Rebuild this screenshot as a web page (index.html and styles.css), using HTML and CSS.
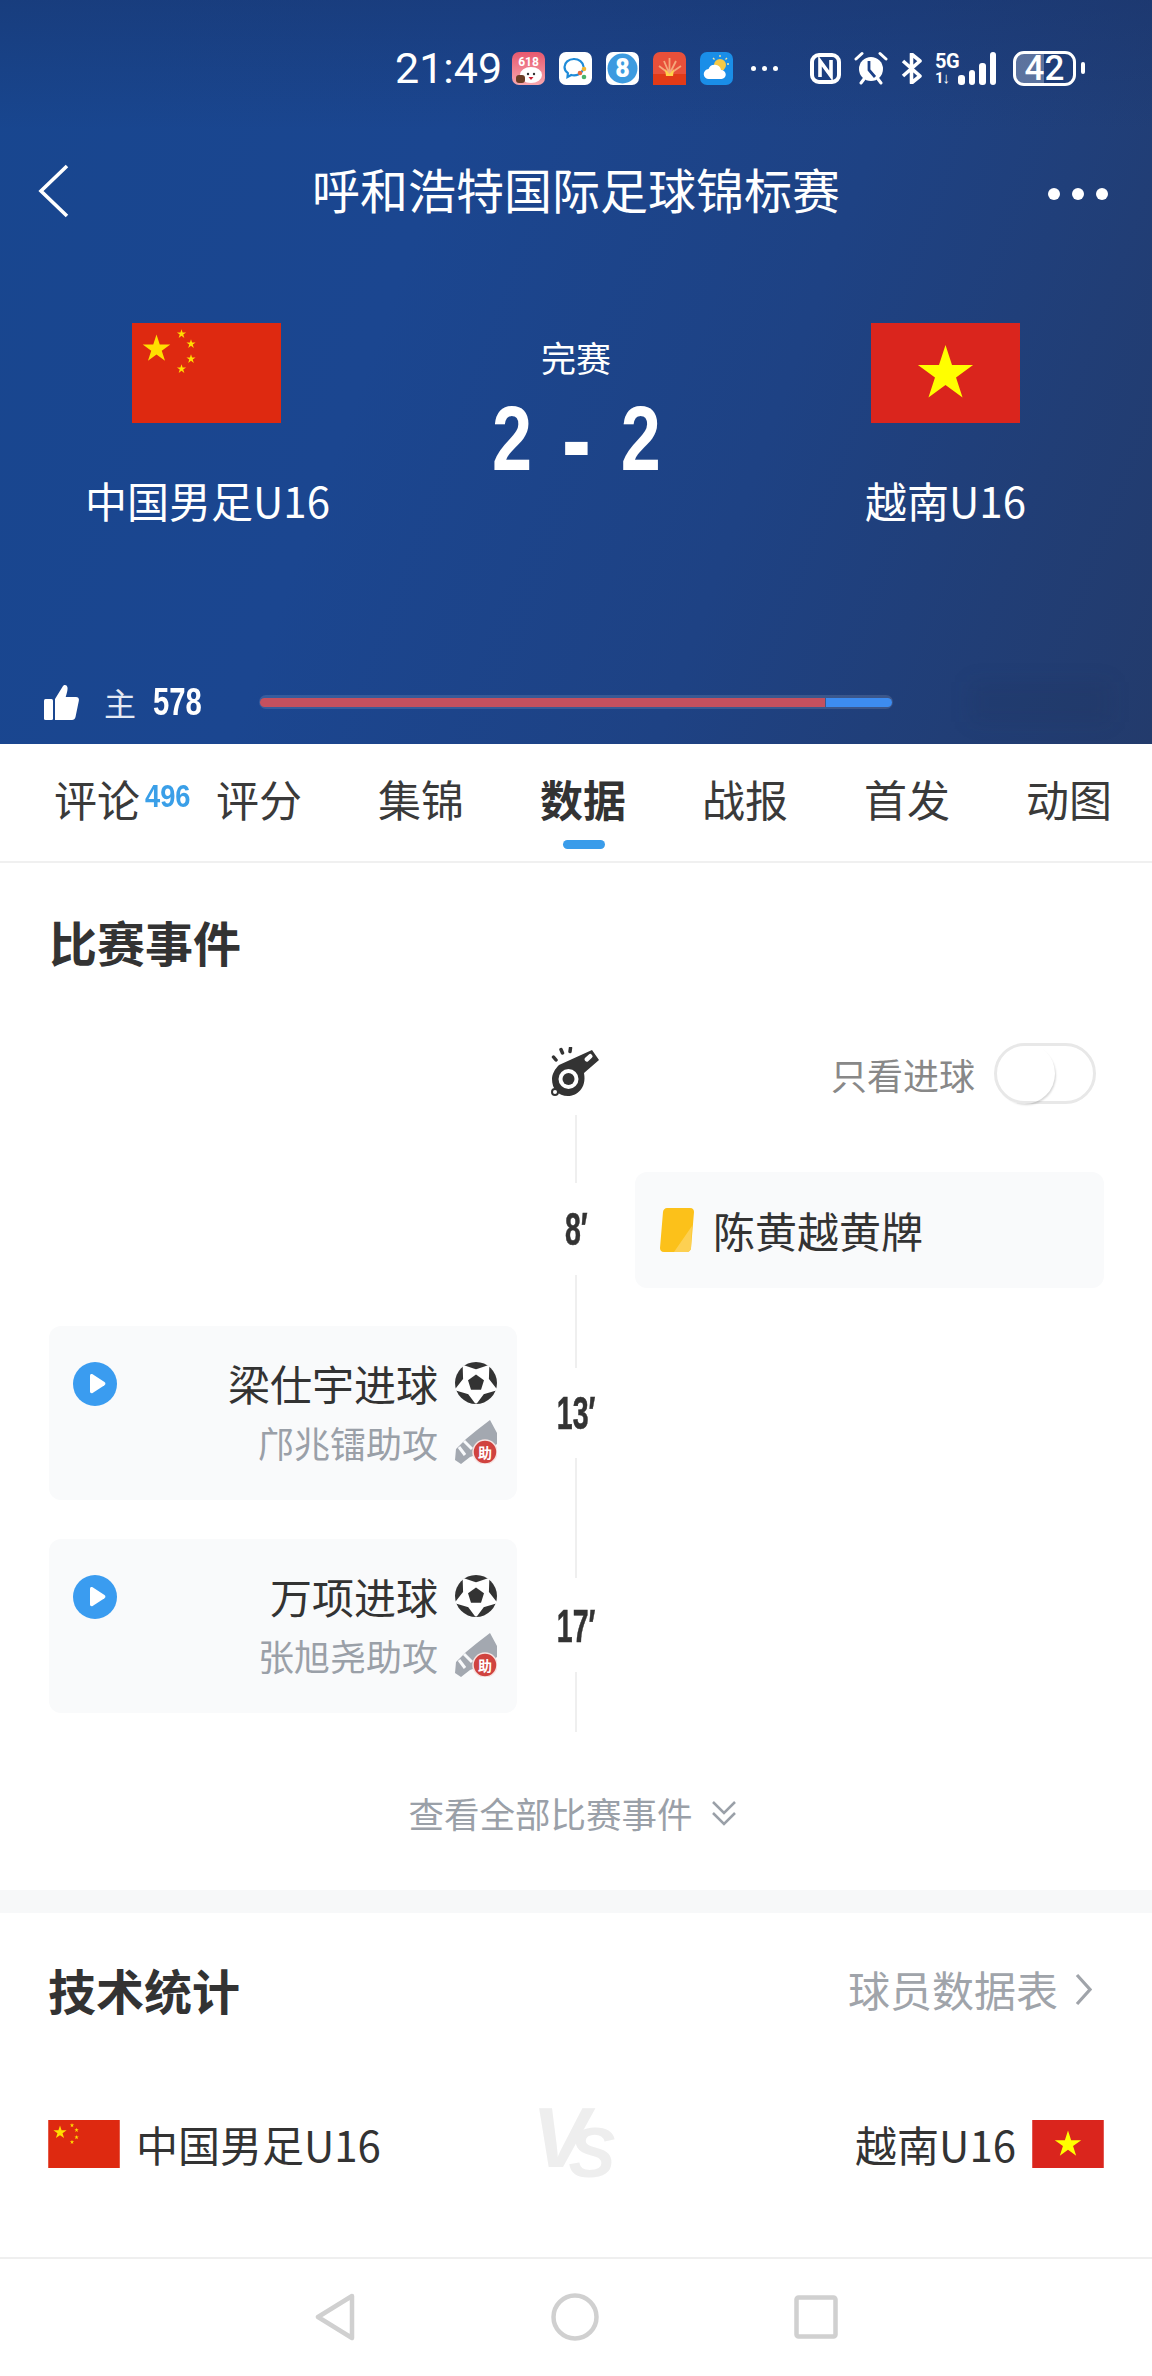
FILE: index.html
```html
<!DOCTYPE html>
<html lang="zh-CN">
<head>
<meta charset="utf-8">
<title>呼和浩特国际足球锦标赛</title>
<link rel="stylesheet" href="styles.css">
</head>
<body>
<svg class="defs" width="0" height="0" aria-hidden="true">
  <defs>
    <path id="star" d="M0-1 .2245-.309H.951L.363.118.588.809 0 .382-.588.809-.363.118-.951-.309H-.2245Z"/>
    <symbol id="flag-cn" viewBox="0 0 149 100">
      <rect width="149" height="100" fill="#de2910"/>
      <g fill="#ffde00">
        <use href="#star" transform="translate(24.5 26) scale(14.5)"/>
        <use href="#star" transform="translate(49.5 11) scale(4.8)"/>
        <use href="#star" transform="translate(59 21) scale(4.8)"/>
        <use href="#star" transform="translate(59 36) scale(4.8)"/>
        <use href="#star" transform="translate(49.5 46) scale(4.8)"/>
      </g>
    </symbol>
    <symbol id="flag-vn" viewBox="0 0 149 100">
      <rect width="149" height="100" fill="#da251d"/>
      <use href="#star" fill="#ffff00" transform="translate(74.5 51) scale(29)"/>
    </symbol>
    <symbol id="ball" viewBox="0 0 42 42">
      <circle cx="21" cy="21" r="21" fill="#333"/>
      <path d="M32.8 4.8 32.4 17.3 40 27.2 28.1 30.7 21 40 13.9 30.7 2 27.2 9.6 17.3 9.2 4.8 21 9Z" fill="#fff" stroke="#fff" stroke-width="3" stroke-linejoin="round"/>
      <path d="M21 12.500 29 18.300 26 27.800H16L13 18.300Z" fill="#333"/>
    </symbol>
    <symbol id="boot" viewBox="0 0 42 44">
      <path d="M22 10 35 0 42 13V24L30 32 15 37 6 44 0 40 1 29 11 19Z" fill="#a3a8b0"/>
      <path d="M9 21 17 29M4 27 10 35" stroke="#f8f9fb" stroke-width="3"/>
      <circle cx="30" cy="32" r="12" fill="#d0433f" stroke="#f6e4e2" stroke-width="1.500"/>
    </symbol>
    <symbol id="play" viewBox="0 0 44 44">
      <circle cx="22" cy="22" r="22" fill="#3a9cf0"/>
      <path d="M17 13.500c0-1.400 1.400-2 2.600-1.300L31.500 20c1.200.8 1.200 2.400 0 3.200L19.600 31c-1.200.7-2.600 0-2.600-1.400Z" fill="#fff"/>
    </symbol>
  </defs>
</svg>

<div class="page">
  <header class="hero">
    <div class="status">
      <span class="clock">21:49</span>
      <div class="apps">
        <svg class="app" viewBox="0 0 33 33"><defs><linearGradient id="g618" x1="0" y1="0" x2="0" y2="1"><stop offset="0" stop-color="#e8586e"/><stop offset="1" stop-color="#f7a6ae"/></linearGradient></defs><rect width="33" height="33" rx="7" fill="url(#g618)"/><text x="16.500" y="14" class="app-618" text-anchor="middle">618</text><ellipse cx="19" cy="23" rx="11" ry="8" fill="#fff"/><circle cx="16" cy="22" r="1.200" fill="#333"/><circle cx="22" cy="22" r="1.200" fill="#333"/><path d="M16.500 25h5l-2.500 3Z" fill="#c23"/><rect x="4" y="23" width="9" height="8" rx="3" fill="#6b3e26"/></svg>
        <svg class="app" viewBox="0 0 33 33"><rect width="33" height="33" rx="7" fill="#fff"/><path d="M15 7C9.500 7 5.500 10.500 5.500 15c0 2.600 1.300 4.700 3.400 6.200L8.500 25l3.800-2c5 1 10-.8 11.500-4.800" fill="none" stroke="#1e8bd8" stroke-width="2.200" stroke-linecap="round"/><path d="M15 7c5 0 9 3 9.500 7.500" fill="none" stroke="#1e8bd8" stroke-width="2.200" stroke-linecap="round"/><circle cx="25" cy="17" r="2.300" fill="#f2b632"/><circle cx="21" cy="21" r="2.300" fill="#e56a3c"/><circle cx="25" cy="25" r="2.300" fill="#49b36a"/></svg>
        <svg class="app" viewBox="0 0 33 33"><rect width="33" height="33" rx="7" fill="#fff"/><circle cx="16.500" cy="16.500" r="15" fill="#3d9be0"/><text x="16.500" y="25" class="app-8" text-anchor="middle">8</text></svg>
        <svg class="app" viewBox="0 0 33 33"><rect width="33" height="33" rx="7" fill="#e8503a"/><rect y="22" width="33" height="11" fill="#e23a17"/><path d="M16.500 22 11 9M16.500 22 16.500 6M16.500 22 23 9M16.500 22 6 14M16.500 22 28 14" stroke="#f6a77a" stroke-width="1.800"/><path d="M12 17l4.500 5 4.500-5-1 7h-7Z" fill="#ffd24a"/></svg>
        <svg class="app" viewBox="0 0 33 33"><rect width="33" height="33" rx="7" fill="#1a8ee8"/><circle cx="20" cy="13" r="6" fill="#f6c945"/><path d="M20 3v2M29 12h-2M27 6l-1.500 1.500M13 6l1.500 1.500" stroke="#f6e7a0" stroke-width="1.300"/><path d="M9 27a5 5 0 0 1-.5-10 6.500 6.500 0 0 1 12.500 1 4.500 4.500 0 0 1 .5 9Z" fill="#fff"/></svg>
      </div>
      <div class="more-notif"><i></i><i></i><i></i></div>
      <svg class="st-nfc" viewBox="0 0 31 31"><rect x="2" y="2" width="27" height="27" rx="7" fill="none" stroke="#fff" stroke-width="4"/><path d="M10 24V8l11 15V7" fill="none" stroke="#fff" stroke-width="3.600"/></svg>
      <svg class="st-alarm" viewBox="0 0 34 34"><circle cx="17" cy="18" r="12" fill="#fff"/><path d="M2 8 8 2.500M32 8l-6-5.500M7 32l3-4M27 32l-3-4" stroke="#fff" stroke-width="3" stroke-linecap="round"/><path d="M15 10v9l6 7" fill="none" stroke="#1b3f87" stroke-width="2.800"/></svg>
      <svg class="st-bt" viewBox="0 0 22 31"><path d="M2 8 19 23 10.500 30V1L19 8 2 23" fill="none" stroke="#fff" stroke-width="3.600" stroke-linejoin="round"/></svg>
      <div class="st-net"><span class="five-g">5G</span><span class="one-down">1↓</span></div>
      <div class="signal"><i class="s1"></i><i class="s2"></i><i class="s3"></i><i class="s4"></i></div>
      <div class="battery"><div class="battery-box"><span>42</span></div><i class="nub"></i></div>
    </div>

    <div class="nav-row">
      <svg class="back" viewBox="0 0 32 54"><path d="M29 2 3 27l26 25" fill="none" stroke="#fff" stroke-width="3.600"/></svg>
      <h1 class="title">呼和浩特国际足球锦标赛</h1>
      <div class="dots"><i></i><i></i><i></i></div>
    </div>

    <div class="match">
      <div class="team">
        <svg class="flag-big flag-left"><use href="#flag-cn"/></svg>
        <div class="team-name">中国男足U16</div>
      </div>
      <div class="score-box">
        <div class="state">完赛</div>
        <div class="score"><span>2</span><span class="dash">-</span><span>2</span></div>
      </div>
      <div class="team team-right">
        <svg class="flag-big"><use href="#flag-vn"/></svg>
        <div class="team-name">越南U16</div>
      </div>
    </div>

    <div class="likes">
      <svg class="thumb" viewBox="0 0 35 36"><rect y="15" width="9" height="21" rx="1.500" fill="#fff"/><path d="M11 15 19 2c.8-1.500 4-1.800 4.500 1.500.3 2.500-.8 6-1.800 9.500H32c2.500 0 3.300 1.800 2.800 4L31.500 33c-.4 2-1.800 3-3.500 3H11Z" fill="#fff"/></svg>
      <span class="home">主</span>
      <span class="like-num">578</span>
      <div class="bar"><div class="bar-red"></div><div class="bar-blue"></div></div>
      <div class="smudge"></div>
    </div>
  </header>

  <nav class="tabs">
    <a class="tab">评论<sup class="badge">496</sup></a>
    <a class="tab">评分</a>
    <a class="tab">集锦</a>
    <a class="tab active">数据</a>
    <a class="tab">战报</a>
    <a class="tab">首发</a>
    <a class="tab">动图</a>
  </nav>

  <section class="events">
    <h2 class="heading">比赛事件</h2>
    <div class="timeline">
      <div class="side left">
        <div class="event-card goal">
          <svg class="play"><use href="#play"/></svg>
          <div class="goal-lines">
            <div class="goal-line"><span class="goal-name">梁仕宇进球</span><svg class="ic42"><use href="#ball"/></svg></div>
            <div class="goal-line"><span class="assist-name">邝兆镭助攻</span><span class="boot-wrap"><svg class="ic-boot"><use href="#boot"/></svg><b class="boot-mark">助</b></span></div>
          </div>
        </div>
        <div class="event-card goal">
          <svg class="play"><use href="#play"/></svg>
          <div class="goal-lines">
            <div class="goal-line"><span class="goal-name">万项进球</span><svg class="ic42"><use href="#ball"/></svg></div>
            <div class="goal-line"><span class="assist-name">张旭尧助攻</span><span class="boot-wrap"><svg class="ic-boot"><use href="#boot"/></svg><b class="boot-mark">助</b></span></div>
          </div>
        </div>
      </div>

      <div class="axis">
        <svg class="whistle" viewBox="0 0 48 49">
          <path d="M5 13 2.500 10M11.500 6 10 2.500M19 4.500 19.500 1" stroke="#333" stroke-width="3.500" stroke-linecap="round"/>
          <path d="M8 18 41 3 48 13 33 26C36 42 25 49 17 49 7 49 1 42 1 32c0-5 3-10 7-14Z" fill="#333"/>
          <circle cx="17.500" cy="32" r="10" fill="#fff"/>
          <circle cx="17.500" cy="32" r="6" fill="#333"/>
          <rect x="33" y="9" width="9" height="4.500" rx="2" transform="rotate(-42 37 11)" fill="#fff"/>
          <circle cx="4" cy="45" r="3" fill="#fff" stroke="#333" stroke-width="2"/>
        </svg>
        <i class="seg seg-a"></i>
        <div class="minute m8"><span>8′</span></div>
        <i class="seg seg-b"></i>
        <div class="minute m13"><span>13′</span></div>
        <i class="seg seg-c"></i>
        <div class="minute m17"><span>17′</span></div>
        <i class="seg seg-d"></i>
      </div>

      <div class="side right">
        <div class="only-goals"><span>只看进球</span><div class="toggle"><i></i></div></div>
        <div class="event-card card-event">
          <svg class="yellow" viewBox="0 0 34 44"><path d="M7 0h23c3 0 4 2 4 4l-3 36c0 2-2 4-4 4H4c-3 0-4-2-4-4L3 4c0-2 2-4 4-4Z" fill="#fcc11a"/><path d="M32 18 31 40c0 2-2 4-4 4H14Z" fill="#fdd052"/></svg>
          <span class="goal-name">陈黄越黄牌</span>
        </div>
      </div>
    </div>
    <div class="all-events">
      <span>查看全部比赛事件</span>
      <svg class="dbl" viewBox="0 0 26 26"><path d="M2 2 13 13 24 2M2 13 13 24 24 13" fill="none" stroke="#9aa0a8" stroke-width="2.500"/></svg>
    </div>
  </section>

  <div class="band"></div>

  <section class="stats">
    <div class="stats-head">
      <h2 class="heading">技术统计</h2>
      <div class="player-link"><span>球员数据表</span><svg class="right-chev" viewBox="0 0 17 33"><path d="M2 2 15 16.500 2 31" fill="none" stroke="#a0a4aa" stroke-width="3.200"/></svg></div>
    </div>
    <div class="versus">
      <div class="versus-side">
        <svg class="flag-small"><use href="#flag-cn"/></svg>
        <span class="versus-name">中国男足U16</span>
      </div>
      <div class="vs-mark"><span class="vs-v">V</span><span class="vs-s">S</span></div>
      <div class="versus-side">
        <span class="versus-name">越南U16</span>
        <svg class="flag-small"><use href="#flag-vn"/></svg>
      </div>
    </div>
  </section>

  <footer class="sysnav">
    <svg class="sys-back" viewBox="0 0 42 48"><path d="M38 3 4 24l34 21Z" fill="none" stroke="#d0d0d0" stroke-width="4.500" stroke-linejoin="round"/></svg>
    <svg class="sys-home" viewBox="0 0 48 48"><circle cx="24" cy="24" r="21.500" fill="none" stroke="#d0d0d0" stroke-width="4.500"/></svg>
    <svg class="sys-recent" viewBox="0 0 44 44"><rect x="2.500" y="2.500" width="39" height="39" rx="2" fill="none" stroke="#d0d0d0" stroke-width="4.500"/></svg>
  </footer>
</div>
</body>
</html>
```

FILE: styles.css
```css
* { box-sizing: border-box; }
html, body { margin: 0; padding: 0; background: #fff; }
body { font-family: "Noto Sans CJK SC", "Noto Sans", sans-serif; color: #333; }
i { display: block; }
h1, h2 { margin: 0; }
.defs { display: block; height: 0; }
.page { width: 1152px; height: 2376px; overflow: hidden; display: flex; flex-direction: column; background: #fff; }

/* hero */
.hero {
  height: 744px; flex: none; color: #fff; display: flex; flex-direction: column;
  background:
    linear-gradient(180deg, rgba(24,48,100,.4) 0, rgba(24,48,100,0) 130px),
    linear-gradient(110deg, #18468f 0%, #1b4690 35%, #1e4284 65%, #233b6c 100%);
}
.status { height: 86px; padding: 50px 0 0 395px; display: flex; align-items: center; flex: none; }
.clock { font-family: Roboto, sans-serif; font-size: 43px; line-height: 36px; width: 117px; flex: none; }
.apps { display: flex; gap: 14px; flex: none; }
.app { width: 33px; height: 33px; display: block; }
.app-618 { font: 700 12px Roboto, sans-serif; fill: #fff; }
.app-8 { font: 900 25px Roboto, sans-serif; fill: #fff; }
.more-notif { display: flex; gap: 6px; margin-left: 18px; }
.more-notif i { width: 5px; height: 5px; border-radius: 50%; background: #fff; }
.st-nfc { width: 31px; height: 31px; margin-left: 32px; flex: none; }
.st-alarm { width: 34px; height: 34px; margin-left: 13px; flex: none; }
.st-bt { width: 22px; height: 31px; margin-left: 13px; flex: none; }
.st-net { width: 24px; margin-left: 12px; display: flex; flex-direction: column; font-family: Roboto, sans-serif; font-weight: 700; line-height: 1; flex: none; }
.five-g { font-size: 20px; line-height: 19px; letter-spacing: -.5px; }
.one-down { font-size: 15px; line-height: 14px; letter-spacing: -1px; }
.signal { display: flex; align-items: flex-end; gap: 4px; height: 34px; margin-left: -1px; flex: none; }
.signal i { width: 6.500px; background: #fff; border-radius: 3px; }
.s1 { height: 10px; } .s2 { height: 15px; } .s3 { height: 22px; } .s4 { height: 33px; }
.battery { display: flex; align-items: center; margin-left: 17px; flex: none; }
.battery-box { width: 63px; height: 35px; border: 3px solid #fff; border-radius: 11px; display: flex; align-items: center; justify-content: center; background: linear-gradient(90deg, rgba(255,255,255,.28) 0 50%, transparent 50%); }
.battery-box span { font: 500 35px/29px Roboto, sans-serif; }
.nub { width: 4px; height: 12px; border-radius: 2px; background: #fff; margin-left: 5px; }

.nav-row { margin-top: 75px; height: 60px; flex: none; display: grid; grid-template-columns: 1fr auto 1fr; grid-template-rows: 60px; align-items: center; padding: 0 44px; }
.back { width: 32px; height: 54px; display: block; margin-left: -6px; }
.title { font-size: 48px; line-height: 60px; font-weight: 400; white-space: nowrap; margin-bottom: 6px; }
.dots { display: flex; justify-content: flex-end; gap: 12px; margin-top: 6px; }
.dots i { width: 12px; height: 12px; border-radius: 50%; background: #fff; }

.match { margin-top: 102px; display: grid; grid-template-columns: 415px 322px 415px; flex: none; }
.team { display: flex; flex-direction: column; align-items: center; }
.team-right { padding-left: 2px; }
.flag-big { width: 149px; height: 100px; display: block; }
.flag-left { margin-right: 3px; }
.team-name { margin-top: 52px; font-size: 42px; line-height: 50px; white-space: nowrap; }
.score-box { display: flex; flex-direction: column; align-items: center; }
.state { margin-top: 14px; font-size: 35px; line-height: 40px; }
.score { margin-top: 17px; height: 90px; display: flex; align-items: center; justify-content: center; gap: 37px; font-family: "Liberation Sans", sans-serif; font-weight: 700; font-size: 90px; line-height: 90px; transform: scaleX(.8); }
.dash { font-size: 110px; }

.likes { margin-top: auto; height: 44px; margin-bottom: 20px; padding-left: 44px; display: flex; align-items: center; flex: none; }
.thumb { width: 35px; height: 36px; flex: none; }
.home { margin-left: 25px; font-size: 32px; line-height: 40px; width: 32px; color: #e4eaf4; }
.like-num { display: block; margin-left: 17px; width: 57px; font-family: "Liberation Sans", sans-serif; font-weight: 700; font-size: 38px; line-height: 40px; transform: scaleX(.77); transform-origin: left center; }
.bar { width: 634px; height: 14px; margin-left: 49px; padding: 2.500px 1px; border-radius: 7px; background: rgba(255,255,255,.12); display: flex; gap: 1px; flex: none; }
.bar-red { width: 565px; background: #c4505e; border-radius: 5px 0 0 5px; }
.bar-blue { flex: 1; background: #3d8cf0; border-radius: 0 5px 5px 0; }
.smudge { width: 140px; height: 40px; margin-left: 77px; background: rgba(30,40,70,.1); filter: blur(10px); }

/* tabs */
.tabs { height: 119px; flex: none; border-bottom: 2px solid #f0f0f0; display: flex; gap: 76px; padding: 0 0 0 54px; }
.tab { position: relative; width: 86px; flex: none; font-size: 43px; line-height: 108px; height: 117px; color: #3a3a3a; white-space: nowrap; }
.tab.active { font-weight: 700; color: #333; }
.tab.active::after { content: ""; position: absolute; left: 23px; top: 96px; width: 42px; height: 9px; border-radius: 5px; background: #3a9cea; }
.badge { position: absolute; left: 91px; top: 38px; font-family: "Liberation Sans", sans-serif; font-weight: 700; font-size: 31px; line-height: 30px; color: #3a9fe8; vertical-align: baseline; transform: scaleX(.88); transform-origin: left center; }

/* events */
.events { height: 1027px; flex: none; }
.heading { font-size: 48px; line-height: 60px; font-weight: 700; color: #333; white-space: nowrap; }
.events > .heading { margin: 48px 0 0 49px; }
.timeline { margin-top: 72px; display: grid; grid-template-columns: 468px 118px 469px; padding-left: 49px; }
.axis { display: flex; flex-direction: column; align-items: center; padding-top: 4px; }
.whistle { width: 48px; height: 49px; display: block; margin-bottom: 19px; flex: none; margin-left: -2px; }
.seg { width: 2px; background: #efefef; flex: none; }
.seg-a { height: 68px; } .seg-b { height: 93px; } .seg-c { height: 120px; } .seg-d { height: 60px; }
.minute { width: 100%; text-align: center; font-family: "Liberation Sans", sans-serif; font-weight: 700; font-size: 46px; line-height: 90px; color: #333; flex: none; white-space: nowrap; }
.minute span { display: inline-block; transform: scaleX(.62); -webkit-text-stroke: .6px #333; }
.m8 { height: 92px; padding-top: 1px; } .m13 { height: 90px; } .m17 { height: 94px; padding-top: 3px; }
.side.left { padding-top: 283px; display: flex; flex-direction: column; gap: 39px; }
.side.right { display: flex; flex-direction: column; }
.event-card { background: #f9fafb; border-radius: 12px; }
.goal { height: 174px; padding: 36px 20px 0 24px; display: flex; justify-content: space-between; }
.play { width: 44px; height: 44px; display: block; flex: none; }
.goal-lines { display: flex; flex-direction: column; gap: 17px; align-items: flex-end; }
.goal-line { display: flex; align-items: center; justify-content: flex-end; gap: 17px; height: 42px; }
.goal-name { font-size: 42px; line-height: 44px; color: #333; white-space: nowrap; }
.assist-name { font-size: 36px; line-height: 44px; color: #9aa0a8; white-space: nowrap; }
.ic42 { width: 42px; height: 42px; display: block; flex: none; }
.boot-wrap { position: relative; width: 42px; height: 44px; display: block; flex: none; }
.ic-boot { width: 42px; height: 44px; display: block; }
.boot-mark { position: absolute; right: 0; bottom: 0; width: 24px; line-height: 24px; font-size: 14px; font-weight: 700; text-align: center; color: #fff; }
.only-goals { height: 61px; display: flex; align-items: center; justify-content: flex-end; gap: 19px; padding-right: 8px; margin-bottom: 68px; }
.only-goals span { font-size: 36px; line-height: 44px; color: #888; white-space: nowrap; }
.toggle { width: 102px; height: 61px; border-radius: 31px; border: 3px solid #e8e8e8; background: #fff; flex: none; }
.toggle i { width: 61px; height: 61px; margin: -3px 0 0 -3px; border-radius: 50%; background: transparent; box-shadow: 2px 2px 2px -1px rgba(0,0,0,.16); }
.card-event { height: 116px; display: flex; align-items: center; gap: 19px; padding-left: 25px; }
.yellow { width: 34px; height: 44px; display: block; flex: none; }
.all-events { margin-top: 59px; display: flex; align-items: center; justify-content: center; gap: 18px; padding-right: 7px; }
.all-events span { font-size: 35.500px; line-height: 44px; color: #9aa0a8; white-space: nowrap; }
.dbl { width: 26px; height: 26px; display: block; flex: none; }

.band { height: 23px; flex: none; background: #f7f8f9; }

/* stats */
.stats { flex: none; height: 344px; padding: 0 48px 0 48px; }
.stats-head { margin-top: 46px; height: 60px; display: flex; justify-content: space-between; align-items: center; padding-right: 12px; }
.player-link { display: flex; align-items: center; gap: 17px; }
.player-link span { font-size: 42px; line-height: 50px; color: #a0a4aa; white-space: nowrap; }
.right-chev { width: 17px; height: 33px; display: block; }
.versus { margin-top: 100px; display: grid; grid-template-columns: 1fr auto 1fr; align-items: center; }
.versus-side { display: flex; align-items: center; gap: 16px; }
.versus-side:last-child { justify-content: flex-end; gap: 16px; }
.flag-small { width: 72px; height: 48px; display: block; flex: none; }
.versus-name { font-size: 42px; line-height: 50px; color: #333; white-space: nowrap; }
.vs-mark { width: 80px; height: 72px; margin: -12px 0; display: flex; align-items: flex-start; font-family: "Liberation Sans", sans-serif; font-weight: 700; font-style: italic; color: #eee; }
.vs-v { font-size: 86px; line-height: 86px; margin: -14px 0 0 -4px; }
.vs-s { font-size: 70px; line-height: 70px; margin: 10px 0 0 -21px; }

.sysnav { flex: 1; border-top: 2px solid #efefef; display: flex; align-items: center; justify-content: center; padding-bottom: 2px; }
.sys-back { width: 42px; height: 48px; margin-right: 195px; }
.sys-home { width: 48px; height: 48px; margin-right: 195px; }
.sys-recent { width: 44px; height: 44px; }
```
